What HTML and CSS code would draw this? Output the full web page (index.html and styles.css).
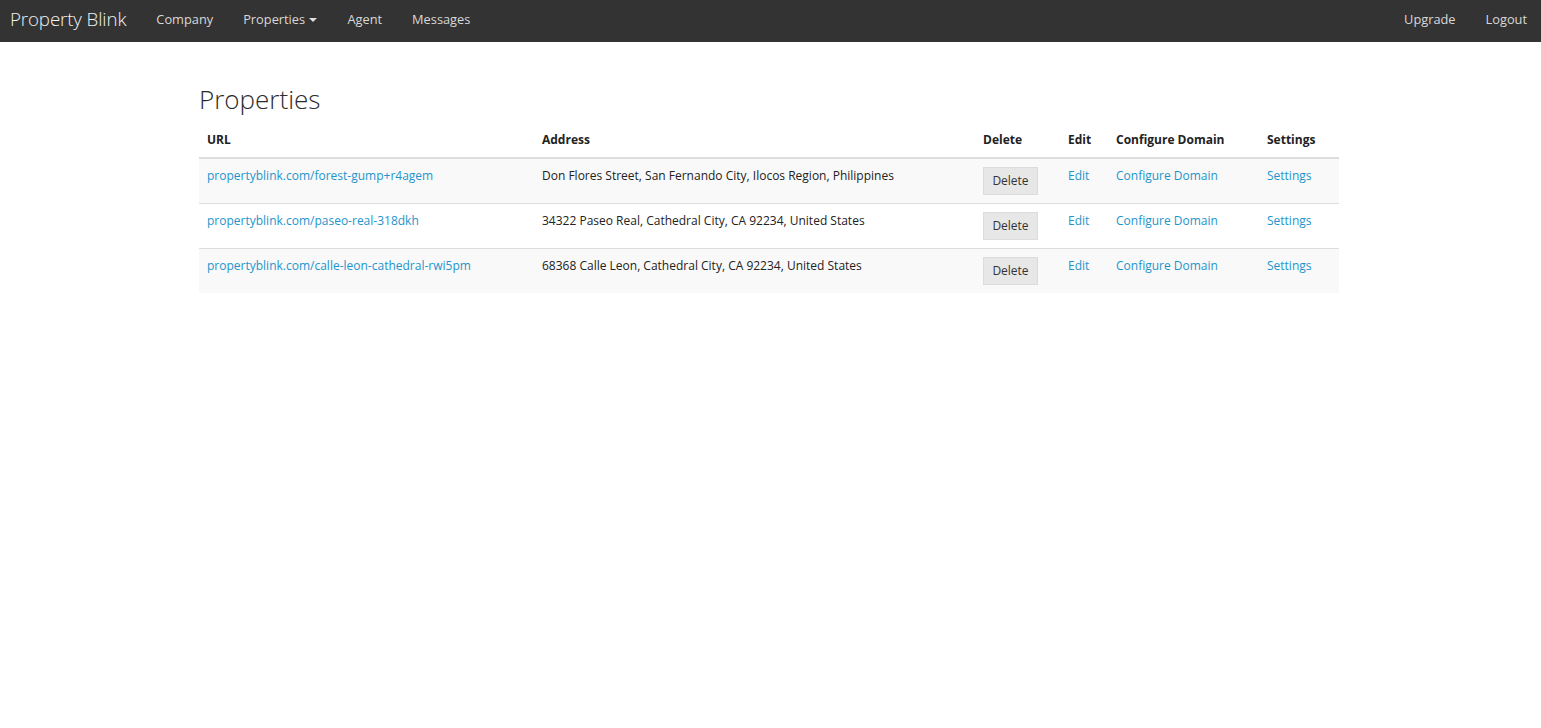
FILE: index.html
```html
<!DOCTYPE html>
<html>
<head>
<meta charset="utf-8">
<title>Properties</title>
<link rel="stylesheet" href="styles.css">
</head>
<body>
<nav class="navbar">
  <div class="nav-left">
    <a class="brand" href="#">Property Blink</a>
    <a class="nav-link" href="#">Company</a>
    <a class="nav-link" href="#">Properties <span class="caret"></span></a>
    <a class="nav-link" href="#">Agent</a>
    <a class="nav-link" href="#">Messages</a>
  </div>
  <div class="nav-right">
    <a class="nav-link" href="#">Upgrade</a>
    <a class="nav-link" href="#">Logout</a>
  </div>
</nav>
<main class="container">
  <h1 class="title">Properties</h1>
  <table class="table">
    <colgroup>
      <col class="c-url"><col class="c-addr"><col class="c-del"><col class="c-edit"><col class="c-dom"><col class="c-set">
    </colgroup>
    <thead>
      <tr><th>URL</th><th>Address</th><th>Delete</th><th>Edit</th><th>Configure Domain</th><th>Settings</th></tr>
    </thead>
    <tbody>
      <tr class="odd">
        <td><a href="#">propertyblink.com/forest-gump+r4agem</a></td>
        <td>Don Flores Street, San Fernando City, Ilocos Region, Philippines</td>
        <td><button class="btn">Delete</button></td>
        <td><a href="#">Edit</a></td>
        <td><a href="#">Configure Domain</a></td>
        <td><a href="#">Settings</a></td>
      </tr>
      <tr>
        <td><a href="#">propertyblink.com/paseo-real-318dkh</a></td>
        <td>34322 Paseo Real, Cathedral City, CA 92234, United States</td>
        <td><button class="btn">Delete</button></td>
        <td><a href="#">Edit</a></td>
        <td><a href="#">Configure Domain</a></td>
        <td><a href="#">Settings</a></td>
      </tr>
      <tr class="odd">
        <td><a href="#">propertyblink.com/calle-leon-cathedral-rwi5pm</a></td>
        <td>68368 Calle Leon, Cathedral City, CA 92234, United States</td>
        <td><button class="btn">Delete</button></td>
        <td><a href="#">Edit</a></td>
        <td><a href="#">Configure Domain</a></td>
        <td><a href="#">Settings</a></td>
      </tr>
    </tbody>
  </table>
</main>
</body>
</html>
```
FILE: styles.css
```css
* { box-sizing: border-box; }
body {
  margin: 0;
  font-family: "Open Sans", "Noto Sans", sans-serif;
  font-size: 13px;
  line-height: 18px;
  color: #333;
  background: #fff;
}
a { color: #1d95cc; text-decoration: none; }
.navbar {
  height: 42px;
  padding-bottom: 4px;
  background: #333333;
  display: flex;
  justify-content: space-between;
  align-items: center;
}
.nav-left, .nav-right { display: flex; align-items: center; }
.brand {
  color: #f2f2f2;
  font-size: 18.7px;
  font-weight: 300;
  padding: 0 15px 0 10px;
  letter-spacing: -0.1px;
}
.nav-link {
  color: #d8d8d8;
  padding: 0 15px;
  font-size: 12.8px;
}
.nav-right .nav-link:last-child { padding-right: 14px; }
.caret {
  display: inline-block;
  width: 0; height: 0;
  border-top: 4px solid #e0e0e0;
  border-left: 4px solid transparent;
  border-right: 4px solid transparent;
  vertical-align: middle;
  margin-left: 1px;
  margin-top: -2px;
}
.container {
  width: 1140px;
  margin-left: calc(50% - 571.5px);
  padding-top: 42px;
}
.title {
  margin: 0 0 9px;
  font-size: 26px;
  font-weight: 300;
  line-height: 30px;
  color: #2b2b2b;
}
.table {
  width: 1140px;
  border-collapse: collapse;
  table-layout: fixed;
  font-size: 12px;
}
.c-url { width: 335px; }
.c-addr { width: 441px; }
.c-del { width: 85px; }
.c-edit { width: 48px; }
.c-dom { width: 151px; }
.c-set { width: 80px; }
th {
  text-align: left;
  font-weight: 700;
  color: #222;
  padding: 8px;
  border-bottom: 2px solid #dddddd;
}
td {
  padding: 8px;
  vertical-align: top;
  color: #222;
  border-top: 1px solid #dddddd;
  white-space: nowrap;
}
tbody tr:first-child td { border-top: none; }
tr.odd td { background: #f9f9f9; }
.btn {
  display: block;
  font-family: inherit;
  font-size: 12px;
  color: #333;
  background: #e7e7e7;
  border: 1px solid #dcdcdc;
  border-radius: 0;
  height: 28px;
  width: 55px;
  padding: 0;
  line-height: 26px;
  margin: 0;
}
```
